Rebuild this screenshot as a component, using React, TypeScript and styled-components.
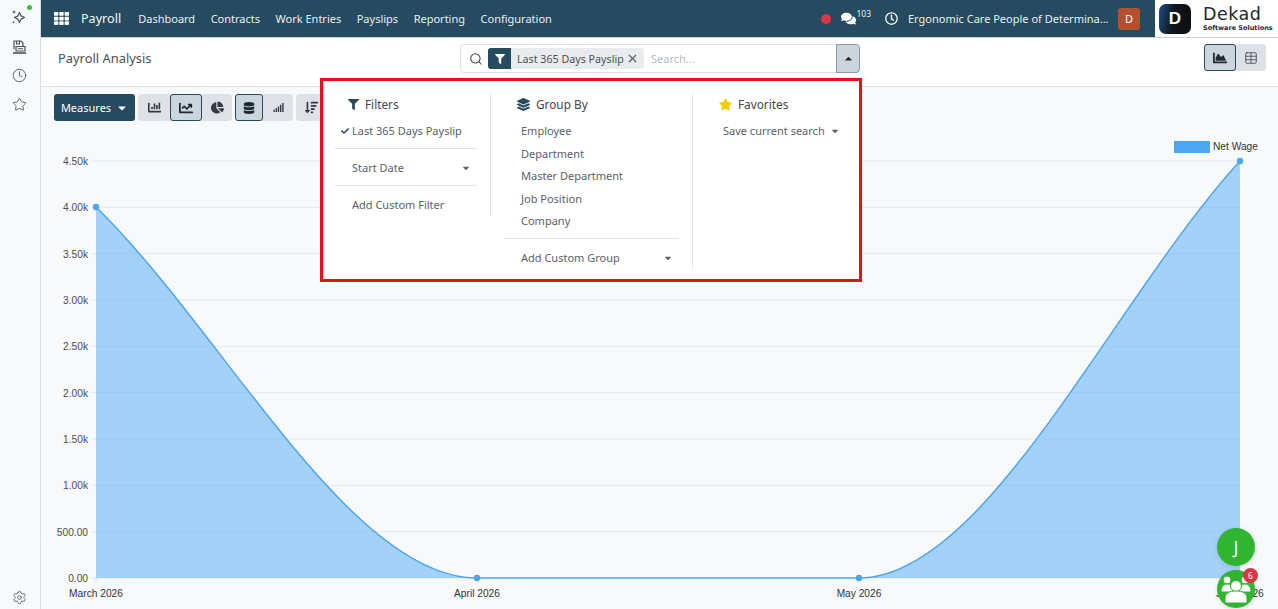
import React from 'react'
import styled, { createGlobalStyle } from 'styled-components'
import {
  FaCaretDown,
  FaCaretUp,
  FaChartArea,
  FaChartBar,
  FaChartLine,
  FaChartPie,
  FaCheck,
  FaComments,
  FaDatabase,
  FaFilter,
  FaLayerGroup,
  FaRegClock,
  FaSignal,
  FaSortAmountDown,
  FaStar,
  FaTh,
} from 'react-icons/fa'
import { Clock, Search, Settings, Star, Table, X } from 'lucide-react'

const NAVY = '#264a5f'
const FONT = '"Noto Sans", "Open Sans", sans-serif'

const GlobalStyle = createGlobalStyle`
  html, body {
    margin: 0;
    height: 100%;
    overflow: hidden;
    background: #f8f9fb;
    font-family: ${FONT};
    color: #4a5158;
  }
  * { box-sizing: border-box; }
`

const Page = styled.div`
  position: relative;
  display: flex;
  width: 1278px;
  height: 609px;
  overflow: hidden;
`

const Rail = styled.aside`
  width: 41px;
  flex-shrink: 0;
  display: flex;
  flex-direction: column;
  align-items: center;
  padding: 8px 2px 0 0;
  gap: 11px;
  color: #4b5257;
  background: #f8f9fb;
  border-right: 1px solid #d9dcdf;
`

const RailIcon = styled.div<{ $bottom?: boolean }>`
  position: relative;
  width: 18px;
  height: 18px;
  display: flex;
  align-items: center;
  justify-content: center;
  ${p => p.$bottom && 'margin-top: auto; margin-bottom: 3px;'}
`

const OnlineDot = styled.span`
  position: absolute;
  top: -3px;
  right: -4px;
  width: 5px;
  height: 5px;
  border-radius: 50%;
  background: #3cc13b;
`

const Main = styled.main`
  flex: 1;
  min-width: 0;
  display: flex;
  flex-direction: column;
`

const NavBar = styled.nav`
  height: 38px;
  flex-shrink: 0;
  display: flex;
  align-items: center;
  padding-left: 13px;
  background: ${NAVY};
  border-bottom: 1px solid #c9d1d7;
  color: #e9eef1;
  font-size: 11px;
`

const AppName = styled.span`
  font-size: 12.6px;
  margin: 0 17px 0 12px;
  color: #f4f6f8;
`

const NavItem = styled.span`
  margin-right: 15.5px;
  white-space: nowrap;
`

const NavRight = styled.div`
  margin-left: auto;
  display: flex;
  align-items: center;
  height: 100%;
`

const RecordDot = styled.span`
  width: 10px;
  height: 10px;
  border-radius: 50%;
  background: #dc3545;
  margin-right: 10px;
`

const ChatCount = styled.sup`
  font-size: 8.5px;
  margin: -8px 14px 0 0;
  line-height: 1;
`

const CompanyName = styled.span`
  margin: 0 11px 0 10px;
  width: 199px;
  white-space: nowrap;
`

const Avatar = styled.span`
  width: 22px;
  height: 22px;
  border-radius: 3px;
  background: #b5502f;
  color: #fff;
  display: flex;
  align-items: center;
  justify-content: center;
  font-size: 11px;
  margin-right: 15px;
`

const Brand = styled.div`
  width: 123px;
  height: 37px;
  background: #fff;
  display: flex;
  align-items: center;
  padding-left: 4px;
`

const BrandMark = styled.div`
  width: 32px;
  height: 30px;
  border-radius: 7px;
  background: linear-gradient(100deg, #1d4f86 0%, #10151c 45%, #0c0e12 100%);
  display: flex;
  align-items: center;
  justify-content: center;
  color: #fff;
  font: 700 17px "Liberation Sans", sans-serif;
  margin-right: 12px;
`

const BrandText = styled.div`
  display: flex;
  flex-direction: column;
  color: #23262b;
  font-family: "DejaVu Sans", sans-serif;
`

const BrandName = styled.span`
  font-size: 17.5px;
  line-height: 20px;
  letter-spacing: 0.5px;
`

const BrandTag = styled.span`
  font-size: 6.5px;
  font-weight: 700;
  line-height: 9px;
  white-space: nowrap;
`

const ControlPanel = styled.header`
  height: 49px;
  flex-shrink: 0;
  display: grid;
  grid-template-columns: 1fr 400px 1fr;
  align-items: start;
  padding: 6px 12px 0 17px;
  background: #fff;
  border-bottom: 1px solid #dfe2e6;
`

const PageTitle = styled.h1`
  margin: 0;
  font-size: 12.9px;
  font-weight: 400;
  line-height: 29px;
  color: #4a5158;
`

const SearchBox = styled.div`
  height: 29px;
  margin-left: -2px;
  margin-right: 2px;
  display: flex;
  align-items: center;
  background: #fff;
  border: 1px solid #dee2e6;
  border-radius: 4px;
  padding-left: 8px;
  color: #3f464c;
  font-size: 10.7px;
`

const Facet = styled.div`
  height: 21px;
  display: flex;
  align-items: center;
  margin-left: 5px;
  background: #e9ecef;
  border-radius: 3px;
  overflow: hidden;
  width: 156px;
`

const FacetIcon = styled.span`
  width: 23px;
  height: 100%;
  background: ${NAVY};
  color: #fff;
  display: flex;
  align-items: center;
  justify-content: center;
`

const FacetLabel = styled.span`
  margin: 0 6px 0 6px;
  width: 103px;
  white-space: nowrap;
  color: #4a5158;
`

const SearchHint = styled.span`
  margin-left: 7px;
  color: #b4bac0;
  font-size: 11px;
`

const SearchToggle = styled.span`
  margin-left: auto;
  width: 24px;
  height: 29px;
  margin-right: -1px;
  display: flex;
  align-items: center;
  justify-content: center;
  background: #cdd5dc;
  border: 1px solid #8b9cab;
  border-radius: 0 4px 4px 0;
  color: #22282d;
`

const ViewSwitch = styled.div`
  justify-self: end;
  display: flex;
  height: 27px;
  background: #dee2e6;
  border-radius: 4px;
`

const ToolButton = styled.span<{ $active?: boolean; $w?: number }>`
  width: ${p => p.$w ?? 31}px;
  height: 27px;
  display: flex;
  align-items: center;
  justify-content: center;
  color: #343a40;
  border-radius: 3px;
  ${p => p.$active && `
    background: #cdd5dc;
    border: 1px solid ${NAVY};
    color: #1f2a33;
  `}
`

const Content = styled.section`
  flex: 1;
  min-height: 0;
  display: flex;
  flex-direction: column;
  background: #f8f9fb;
`

const Toolbar = styled.div`
  display: flex;
  align-items: center;
  gap: 3px;
  padding: 7px 0 0 13px;
`

const MeasuresButton = styled.span`
  width: 81px;
  height: 27px;
  background: ${NAVY};
  color: #fff;
  border-radius: 3px;
  display: flex;
  align-items: center;
  justify-content: center;
  gap: 5px;
  font-size: 11px;
`

const ButtonGroup = styled.div`
  display: flex;
  background: #dee2e6;
  border-radius: 4px;
`

const Chart = styled.svg`
  display: block;
  margin-top: 9px;
  width: 1237px;
  height: 479px;
`

const Dropdown = styled.div`
  position: absolute;
  left: 320px;
  top: 78px;
  width: 542px;
  height: 204px;
  background: #fff;
  border: 3px solid #e2141b;
  display: grid;
  grid-template-columns: 168px 202px 1fr;
  padding-top: 12px;
  font-size: 11px;
  color: #5a6168;
`

const MenuColumn = styled.div<{ $left: number; $divider?: boolean }>`
  align-self: start;
  padding: 0 13px 0 ${p => p.$left}px;
  ${p => p.$divider && 'border-right: 1px solid #e3e5e8;'}
`

const MenuHeader = styled.div`
  height: 22px;
  display: flex;
  align-items: center;
  gap: 6px;
  padding-left: 13px;
  margin-bottom: 4.5px;
  font-size: 11.8px;
  color: #3f464c;
`

const MenuItem = styled.div`
  position: relative;
  height: 22.5px;
  display: flex;
  align-items: center;
  justify-content: space-between;
  padding: 0 6px 0 17px;
  white-space: nowrap;
`

const CheckMark = styled.span`
  position: absolute;
  left: 6px;
  top: 7px;
  display: flex;
  color: ${NAVY};
`

const MenuDivider = styled.hr`
  border: 0;
  border-top: 1px solid #e1e3e7;
  margin: 6px 0 7.5px;
`

const GreenBubble = styled.div<{ $top: number }>`
  position: absolute;
  left: 1217px;
  top: ${p => p.$top}px;
  width: 38px;
  height: 38px;
  border-radius: 50%;
  background: #2fb52f;
  color: #fff;
  display: flex;
  align-items: center;
  justify-content: center;
  font-size: 18px;
  box-shadow: 0 1px 5px rgba(0, 0, 0, 0.12);
`

const Badge = styled.span`
  position: absolute;
  top: -2px;
  right: -3px;
  width: 15px;
  height: 15px;
  border-radius: 50%;
  background: #dc3545;
  color: #fff;
  font-size: 8.5px;
  display: flex;
  align-items: center;
  justify-content: center;
`

const TOP_Y = 161
const BOTTOM_Y = 578
const yTicks = ['4.50k', '4.00k', '3.50k', '3.00k', '2.50k', '2.00k', '1.50k', '1.00k', '500.00', '0.00']
const points = [
  { x: 96, y: 207, label: 'March 2026' },
  { x: 477, y: 578, label: 'April 2026' },
  { x: 859, y: 578, label: 'May 2026' },
  { x: 1240, y: 161, label: 'June 2026' },
]

const curve =
  'M96 207 C223 331 350 578 477 578 C604 578 732 578 859 578 C986 578 1113 300 1240 161'

function PayrollChart() {
  return (
    <Chart viewBox="41 130 1237 479">
      {yTicks.map((label, i) => {
        const y = TOP_Y + ((BOTTOM_Y - TOP_Y) / 9) * i
        return (
          <g key={label}>
            <line x1={91} x2={1240} y1={y} y2={y} stroke="#e6e8eb" />
            <text x={88} y={y + 4} textAnchor="end" fontFamily="Liberation Sans" fontSize="10.2" fill="#4d4d4d">
              {label}
            </text>
          </g>
        )
      })}
      <path d={`${curve} L1240 578 L96 578 Z`} fill="rgba(80,170,245,0.5)" />
      <path d={curve} fill="none" stroke="#4ea6ee" strokeWidth="1.5" />
      {points.map(p => (
        <g key={p.label}>
          <line x1={p.x} x2={p.x} y1={578} y2={583} stroke="#dfe2e6" />
          <circle cx={p.x} cy={p.y} r={3.2} fill="#4ea6ee" />
          <text x={p.x} y={597} textAnchor="middle" fontFamily="Liberation Sans" fontSize="10.2" fill="#333">
            {p.label}
          </text>
        </g>
      ))}
      <rect x={1174} y={141} width={36} height={12} fill="#4ea6ee" />
      <text x={1213} y={150} fontFamily="Liberation Sans" fontSize="10.2" fill="#333">
        Net Wage
      </text>
    </Chart>
  )
}

function SparkleIcon() {
  return (
    <svg width="16" height="16" viewBox="0 0 16 16" fill="none" stroke="currentColor" strokeWidth="1.2" strokeLinejoin="round">
      <path d="M8.5 3.5l1.6 3.4 3.4 1.6-3.4 1.6-1.6 3.4-1.6-3.4-3.4-1.6 3.4-1.6z" />
      <path d="M3 1.5v3M1.5 3h3M2.5 12.5v1.5M1.7 13.2h1.6" strokeWidth="1" />
    </svg>
  )
}

function SaveIcon() {
  return (
    <svg width="15" height="15" viewBox="0 0 15 15" fill="none" stroke="currentColor" strokeWidth="1.2">
      <path d="M2 10V2h7l2 2v3" />
      <path d="M4.5 2v3h3V2" />
      <path d="M4 7.5h9V12H4z" fill="#f8f9fb" />
      <path d="M1 14h13" strokeWidth="1.6" />
      <path d="M6 9.7h5" strokeWidth="1" />
    </svg>
  )
}

function GroupIcon() {
  return (
    <svg width="38" height="38" viewBox="0 0 38 38" fill="#fff" stroke="#2fb52f" strokeWidth="1">
      <circle cx="10" cy="10" r="4" />
      <circle cx="28" cy="10" r="4" />
      <path d="M4 22c0-5 2-8 6-8s6 3 6 8z" />
      <path d="M22 22c0-5 2-8 6-8s6 3 6 8z" />
      <circle cx="19" cy="16" r="5.5" />
      <path d="M8 33v-5c0-4.500 4-7 11-7s11 2.500 11 7v5z" />
    </svg>
  )
}

export default function App() {
  return (
    <Page>
      <GlobalStyle />
      <Rail>
        <RailIcon>
          <SparkleIcon />
          <OnlineDot />
        </RailIcon>
        <RailIcon>
          <SaveIcon />
        </RailIcon>
        <RailIcon>
          <Clock size={15} strokeWidth={1.4} />
        </RailIcon>
        <RailIcon>
          <Star size={15} strokeWidth={1.4} />
        </RailIcon>
        <RailIcon $bottom>
          <Settings size={15} strokeWidth={1.3} />
        </RailIcon>
      </Rail>

      <Main>
        <NavBar>
          <FaTh size={15} color="#fff" />
          <AppName>Payroll</AppName>
          <NavItem>Dashboard</NavItem>
          <NavItem>Contracts</NavItem>
          <NavItem>Work Entries</NavItem>
          <NavItem>Payslips</NavItem>
          <NavItem>Reporting</NavItem>
          <NavItem>Configuration</NavItem>
          <NavRight>
            <RecordDot />
            <FaComments size={15} color="#fff" />
            <ChatCount>103</ChatCount>
            <FaRegClock size={13} color="#fff" />
            <CompanyName>Ergonomic Care People of Determina...</CompanyName>
            <Avatar>D</Avatar>
            <Brand>
              <BrandMark>D</BrandMark>
              <BrandText>
                <BrandName>Dekad</BrandName>
                <BrandTag>Software Solutions</BrandTag>
              </BrandText>
            </Brand>
          </NavRight>
        </NavBar>

        <ControlPanel>
          <PageTitle>Payroll Analysis</PageTitle>
          <SearchBox>
            <Search size={14} strokeWidth={1.8} />
            <Facet>
              <FacetIcon>
                <FaFilter size={10} />
              </FacetIcon>
              <FacetLabel>Last 365 Days Payslip</FacetLabel>
              <X size={13} strokeWidth={2.2} color="#5a6168" />
            </Facet>
            <SearchHint>Search...</SearchHint>
            <SearchToggle>
              <FaCaretUp size={11} />
            </SearchToggle>
          </SearchBox>
          <ViewSwitch>
            <ToolButton $active $w={32}>
              <FaChartArea size={14} />
            </ToolButton>
            <ToolButton $w={30}>
              <Table size={14} strokeWidth={1.3} />
            </ToolButton>
          </ViewSwitch>
        </ControlPanel>

        <Content>
          <Toolbar>
            <MeasuresButton>
              Measures <FaCaretDown size={12} />
            </MeasuresButton>
            <ButtonGroup>
              <ToolButton $w={32}>
                <FaChartBar size={13} />
              </ToolButton>
              <ToolButton $active $w={32}>
                <FaChartLine size={14} />
              </ToolButton>
              <ToolButton $w={30}>
                <FaChartPie size={13} />
              </ToolButton>
            </ButtonGroup>
            <ButtonGroup>
              <ToolButton $active $w={28}>
                <FaDatabase size={12} />
              </ToolButton>
              <ToolButton $w={30}>
                <FaSignal size={11} />
              </ToolButton>
            </ButtonGroup>
            <ButtonGroup>
              <ToolButton $w={30}>
                <FaSortAmountDown size={13} />
              </ToolButton>
            </ButtonGroup>
          </Toolbar>
          <PayrollChart />
        </Content>
      </Main>

      <Dropdown>
        <MenuColumn $left={12} $divider>
          <MenuHeader>
            <FaFilter size={11} color={NAVY} />
            Filters
          </MenuHeader>
          <MenuItem>
            <CheckMark>
              <FaCheck size={8} />
            </CheckMark>
            Last 365 Days Payslip
          </MenuItem>
          <MenuDivider />
          <MenuItem>
            Start Date
            <FaCaretDown size={10} />
          </MenuItem>
          <MenuDivider />
          <MenuItem>Add Custom Filter</MenuItem>
        </MenuColumn>
        <MenuColumn $left={13} $divider>
          <MenuHeader>
            <FaLayerGroup size={13} color={NAVY} />
            Group By
          </MenuHeader>
          <MenuItem>Employee</MenuItem>
          <MenuItem>Department</MenuItem>
          <MenuItem>Master Department</MenuItem>
          <MenuItem>Job Position</MenuItem>
          <MenuItem>Company</MenuItem>
          <MenuDivider />
          <MenuItem>
            Add Custom Group
            <FaCaretDown size={10} />
          </MenuItem>
        </MenuColumn>
        <MenuColumn $left={13}>
          <MenuHeader>
            <FaStar size={13} color="#f3cc00" />
            Favorites
          </MenuHeader>
          <MenuItem>
            Save current search
            <FaCaretDown size={10} />
          </MenuItem>
        </MenuColumn>
      </Dropdown>

      <GreenBubble $top={528}>J</GreenBubble>
      <GreenBubble $top={570}>
        <GroupIcon />
        <Badge>6</Badge>
      </GreenBubble>
    </Page>
  )
}
